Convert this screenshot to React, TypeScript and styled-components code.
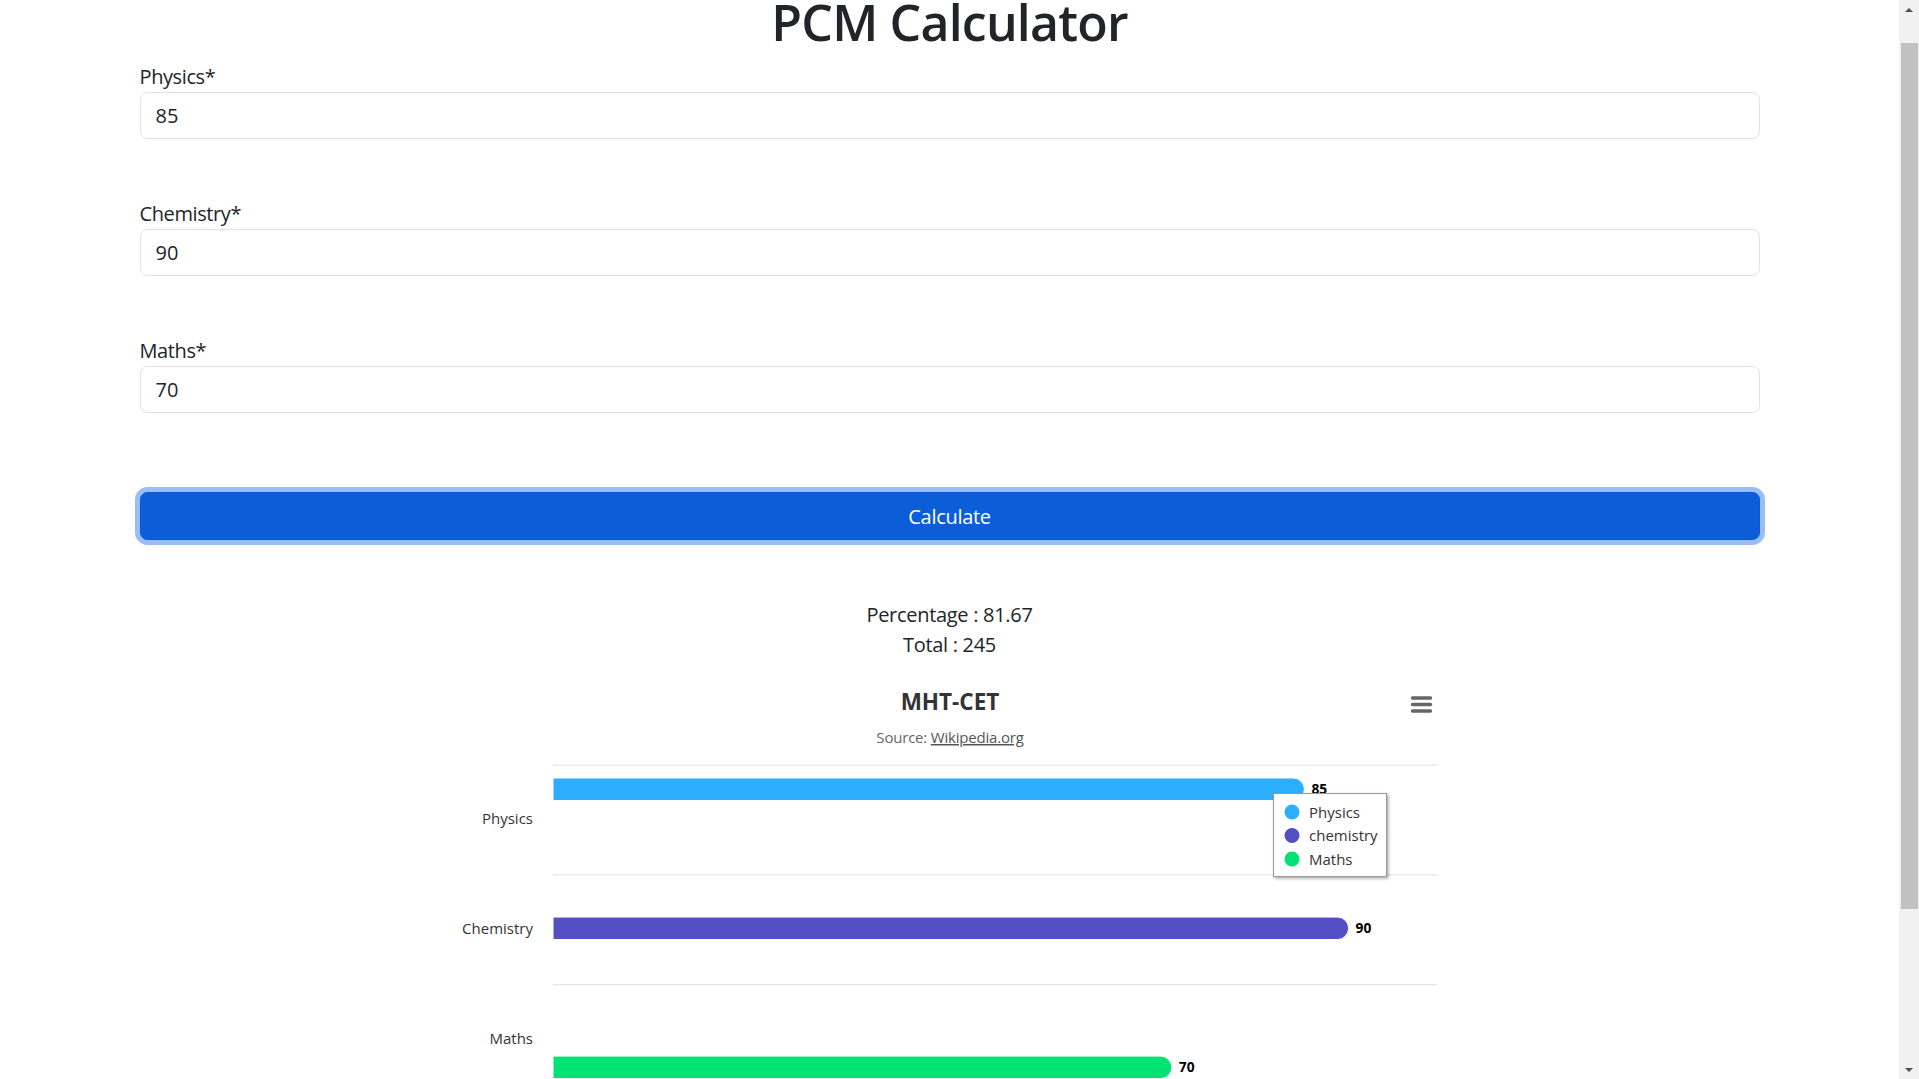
import React from "react";
import styled, { createGlobalStyle } from "styled-components";

const GlobalStyle = createGlobalStyle`
  body {
    margin: 0;
    background: #fff;
    color: #212529;
    font-family: "Segoe UI", "Open Sans", "Noto Sans", sans-serif;
  }
  *, *::before, *::after { box-sizing: border-box; }
`;

const Shell = styled.div`
  padding-right: 20px;
`;

const Page = styled.main`
  max-width: 1650px;
  margin: 0 auto;
  padding: 0 15px 200px;
`;

const Title = styled.h1`
  margin: 0 0 18px;
  text-align: center;
  font-size: 50px;
  font-weight: 600;
  line-height: 44px;
  letter-spacing: -0.8px;
  color: #212529;
`;

const Field = styled.div`
  margin-bottom: 60px;
`;

const Label = styled.label`
  display: block;
  font-size: 20px;
  line-height: 30px;
  letter-spacing: -0.4px;
`;

const Input = styled.input`
  display: block;
  width: 100%;
  height: 47px;
  padding: 7.5px 15px;
  font-family: inherit;
  font-size: 20px;
  color: #212529;
  background: #fff;
  border: 1px solid #dee2e6;
  border-radius: 7.5px;
  outline: none;
`;

const Button = styled.button`
  display: block;
  width: 100%;
  height: 48px;
  margin-top: 79px;
  font-family: inherit;
  font-size: 20px;
  letter-spacing: -0.3px;
  color: #fff;
  background: #0b5ed7;
  border: 1px solid #0a58ca;
  border-radius: 7.5px;
  box-shadow: 0 0 0 5px #98bdfa;
  cursor: pointer;
`;

const Results = styled.div`
  margin-top: 60px;
  text-align: center;
  font-size: 20px;
  line-height: 30px;
  letter-spacing: -0.3px;
`;

const ChartBox = styled.div`
  width: 1000px;
  margin: 20px auto 0;
`;

const ChartSvg = styled.svg`
  display: block;
  font-family: "Segoe UI", "Open Sans", "Noto Sans", sans-serif;
`;

/* browser scrollbar, drawn over the right edge of the window */
const ScrollTrack = styled.div`
  position: fixed;
  top: 0;
  right: 0;
  bottom: 0;
  width: 20px;
  background: #f1f1f1;
  display: flex;
  flex-direction: column;
  align-items: stretch;
`;

const ScrollArrow = styled.div<{ $dir: "up" | "down" }>`
  height: 21px;
  display: flex;
  justify-content: center;
  align-items: ${(p) => (p.$dir === "up" ? "flex-start" : "flex-end")};
  padding: ${(p) => (p.$dir === "up" ? "8px 0 0" : "0 0 7px")};

  &::before {
    content: "";
    width: 0;
    height: 0;
    border-left: 4.5px solid transparent;
    border-right: 4.5px solid transparent;
    ${(p) =>
      p.$dir === "up"
        ? "border-bottom: 4px solid #505050;"
        : "border-top: 4px solid #505050;"}
  }
`;

const ScrollThumb = styled.div`
  margin: 22px 1px 0 2px;
  height: 866px;
  background: #c1c1c1;
`;

const ScrollRest = styled.div`
  flex: 1;
`;

type Item = { name: string; category: string; value: number; color: string };

const data: Item[] = [
  { name: "Physics", category: "Physics", value: 85, color: "#2caffe" },
  { name: "chemistry", category: "Chemistry", value: 90, color: "#544fc5" },
  { name: "Maths", category: "Maths", value: 70, color: "#00e272" },
];

const PX = 103;
const PW = 884;
const PY = 85;
const CAT = 109.75;
const BAR_H = 22.5;

function barPath(x: number, y: number, w: number, h: number) {
  const r = h / 2;
  return `M${x},${y} H${x + w - r} A${r},${r} 0 0 1 ${x + w - r},${y + h} H${x} Z`;
}

function Chart() {
  const plotBottom = PY + CAT * data.length;
  return (
    <ChartSvg width={1000} height={560} viewBox="0 0 1000 560">
      <defs>
        <filter id="legendShadow" x="-20%" y="-20%" width="140%" height="140%">
          <feDropShadow dx="1.5" dy="1.5" stdDeviation="1.5" floodColor="#000" floodOpacity="0.35" />
        </filter>
      </defs>
      <text x={500} y={30} textAnchor="middle" fontSize={22.5} fontWeight={700} fill="#333">
        MHT-CET
      </text>
      <text x={500} y={63} textAnchor="middle" fontSize={15} fill="#666" letterSpacing={-0.2}>
        Source:{" "}
        <tspan fill="#555" textDecoration="underline">
          Wikipedia.org
        </tspan>
      </text>
      <g stroke="#666" strokeWidth={3.4} strokeLinecap="round">
        <line x1={962.5} y1={18} x2={980.5} y2={18} />
        <line x1={962.5} y1={24.5} x2={980.5} y2={24.5} />
        <line x1={962.5} y1={31} x2={980.5} y2={31} />
      </g>
      {Array.from({ length: data.length + 1 }).map((_, i) => (
        <line
          key={i}
          x1={PX}
          x2={PX + PW}
          y1={PY + i * CAT}
          y2={PY + i * CAT}
          stroke="#e6e6e6"
          strokeWidth={1.25}
        />
      ))}
      {data.map((d, i) => (
        <text key={d.category} x={83} y={PY + i * CAT + CAT / 2 + 4.5} textAnchor="end" fontSize={15} fill="#333">
          {d.category}
        </text>
      ))}
      {data.map((d, i) => {
        const y = PY + i * CAT + 13 + i * 29.3;
        const w = (d.value / 100) * PW;
        return (
          <g key={d.name}>
            <path d={barPath(PX, y, w, BAR_H)} fill={d.color} stroke="#fff" strokeWidth={1} />
            <text
              x={PX + w + 7}
              y={y + BAR_H / 2 + 5}
              fontSize={13.75}
              fontWeight={700}
              fill="#000"
              stroke="#fff"
              strokeWidth={2.5}
              strokeLinejoin="round"
              paintOrder="stroke"
            >
              {d.value}
            </text>
          </g>
        );
      })}
      {[0, 20, 40, 60, 80, 100].map((v) => (
        <text key={v} x={PX + (v / 100) * PW} y={plotBottom + 24} textAnchor="middle" fontSize={13.75} fill="#333">
          {v}
        </text>
      ))}
      <g>
        <rect x={823.5} y={113.5} width={113} height={83} fill="#fff" stroke="#999" strokeWidth={1} filter="url(#legendShadow)" />
        {data.map((d, i) => (
          <g key={d.name}>
            <circle cx={842} cy={132 + i * 23.5} r={7.5} fill={d.color} />
            <text x={859} y={137.5 + i * 23.5} fontSize={15} fill="#333">
              {d.name}
            </text>
          </g>
        ))}
      </g>
    </ChartSvg>
  );
}

export default function App() {
  const values = { physics: 85, chemistry: 90, maths: 70 };
  const total = values.physics + values.chemistry + values.maths;
  const pct = ((total / 300) * 100).toFixed(2);
  return (
    <>
      <GlobalStyle />
      <Shell>
        <Page>
          <Title>PCM Calculator</Title>
          <Field>
            <Label htmlFor="physics">Physics*</Label>
            <Input id="physics" type="text" defaultValue="85" />
          </Field>
          <Field>
            <Label htmlFor="chemistry">Chemistry*</Label>
            <Input id="chemistry" type="text" defaultValue="90" />
          </Field>
          <Field>
            <Label htmlFor="maths">Maths*</Label>
            <Input id="maths" type="text" defaultValue="70" />
          </Field>
          <Button type="button">Calculate</Button>
          <Results>
            <div>Percentage : {pct}</div>
            <div>Total : {total}</div>
          </Results>
          <ChartBox>
            <Chart />
          </ChartBox>
        </Page>
      </Shell>
      <ScrollTrack aria-hidden="true">
        <ScrollArrow $dir="up" />
        <ScrollThumb />
        <ScrollRest />
        <ScrollArrow $dir="down" />
      </ScrollTrack>
    </>
  );
}
